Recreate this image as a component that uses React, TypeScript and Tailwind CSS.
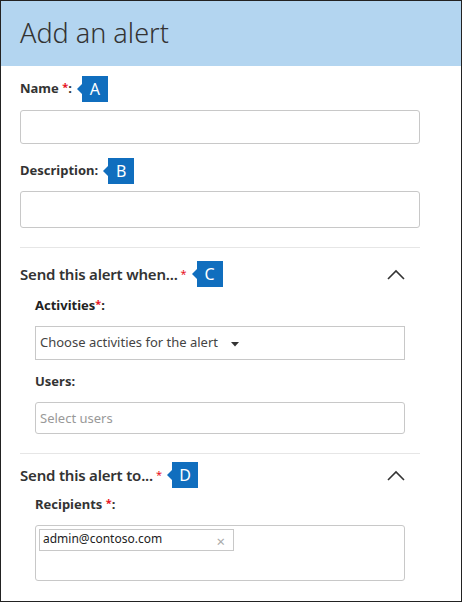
import React from "react"

const font = { fontFamily: '"Noto Sans", "Open Sans", sans-serif' }

function Badge({ letter }: { letter: string }) {
  return (
    <div className="ml-[5px] flex items-center">
      <div className="h-0 w-0 border-y-[5px] border-r-[5px] border-y-transparent border-r-[#106ebe]" />
      <div className="flex h-[26px] w-[26px] items-center justify-center bg-[#106ebe] text-[16px] text-white">
        {letter}
      </div>
    </div>
  )
}

function Star() {
  return <span className="relative -top-[2px] text-[11px] text-[#e81123]">*</span>
}

function Chevron() {
  return (
    <svg width="18" height="11" viewBox="0 0 18 11" className="mr-[15px]">
      <polyline points="1,10 9,2 17,10" fill="none" stroke="#333" strokeWidth="1.6" />
    </svg>
  )
}

export default function App() {
  return (
    <div className="h-[602px] w-[462px] border border-[#222] bg-white" style={font}>
      <div className="flex h-[65px] items-center bg-[#b3d5f0] px-[19px]">
        <h1 className="text-[27px] font-light text-[#333]">Add an alert</h1>
      </div>

      <div className="px-[19px]">
        <div className="mt-[10px] flex h-[26px] items-center">
          <span className="text-[13px] font-bold text-[#333]">
            Name <Star />:
          </span>
          <Badge letter="A" />
        </div>
        <div className="mt-[8px] h-[34px] w-[400px] rounded-[3px] border border-[#c8c8c8]" />

        <div className="mt-[14px] flex h-[26px] items-center">
          <span className="text-[13px] font-bold text-[#333]">Description:</span>
          <Badge letter="B" />
        </div>
        <div className="mt-[7px] h-[37px] w-[400px] rounded-[3px] border border-[#c8c8c8]" />

        <div className="mt-[19px] h-px w-[400px] bg-[#e6e6e6]" />

        <div className="mt-[13px] flex h-[26px] w-[400px] items-center">
          <span className="text-[15px] font-semibold tracking-[-0.2px] text-[#333]">Send this alert when...</span>
          <span className="ml-[3px]">
            <Star />
          </span>
          <Badge letter="C" />
          <div className="flex-1" />
          <Chevron />
        </div>

        <div className="pl-[15px]">
          <div className="mt-[8px] flex h-[22px] items-center">
            <span className="text-[13px] font-bold text-[#222]">
              Activities<Star />:
            </span>
          </div>
          <div className="mt-[9px] flex h-[34px] w-[370px] items-center border border-[#c8c8c8] pl-[4px]">
            <span className="text-[13px] text-[#444]">Choose activities for the alert</span>
            <svg width="8" height="5" viewBox="0 0 8 5" className="ml-[13px] mt-[2px]">
              <polygon points="0,0 8,0 4,4.5" fill="#333" />
            </svg>
          </div>

          <div className="mt-[11px] flex h-[22px] items-center">
            <span className="text-[13px] font-bold text-[#333]">Users:</span>
          </div>
          <div className="mt-[9px] flex h-[32px] w-[370px] items-center rounded-[3px] border border-[#c8c8c8] pl-[4px] pt-[2px]">
            <span className="text-[13px] text-[#999]">Select users</span>
          </div>
        </div>

        <div className="mt-[19px] h-px w-[400px] bg-[#e6e6e6]" />

        <div className="mt-[8px] flex h-[26px] w-[400px] items-center">
          <span className="text-[15px] font-semibold tracking-[-0.2px] text-[#333]">Send this alert to...</span>
          <span className="ml-[3px]">
            <Star />
          </span>
          <Badge letter="D" />
          <div className="flex-1" />
          <Chevron />
        </div>

        <div className="pl-[15px]">
          <div className="mt-[6px] flex h-[22px] items-center">
            <span className="text-[13px] font-bold text-[#333]">
              Recipients <Star />:
            </span>
          </div>
          <div className="mt-[9px] h-[56px] w-[370px] rounded-[3px] border border-[#c8c8c8] p-[3px]">
            <div className="flex h-[22px] w-[195px] items-start justify-between border border-[#c8c8c8] pl-[3px] pr-[8px]">
              <span className="text-[12px] leading-[18px] text-[#222]">admin@contoso.com</span>
              <span className="mt-[1px] text-[15px] leading-[20px] text-[#aaa]">×</span>
            </div>
          </div>
        </div>
      </div>
    </div>
  )
}
